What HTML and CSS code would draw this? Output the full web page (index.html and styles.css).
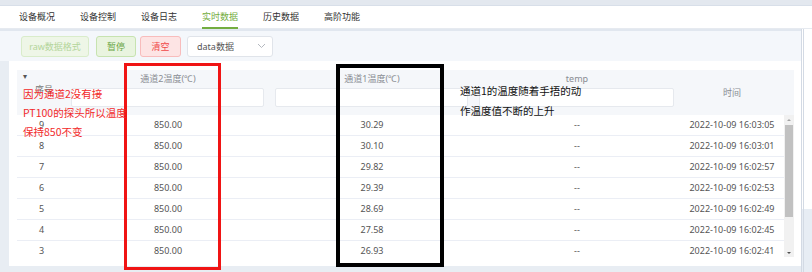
FILE: index.html
```html
<!DOCTYPE html>
<html lang="zh-CN">
<head>
    <meta charset="UTF-8">
    <title>实时数据</title>
    <link rel="stylesheet" href="styles.css">
</head>
<body>
    <div class="topband"></div>
    <nav class="tabs">
        <span class="tab">设备概况</span>
        <span class="tab">设备控制</span>
        <span class="tab">设备日志</span>
        <span class="tab active">实时数据</span>
        <span class="tab">历史数据</span>
        <span class="tab">高阶功能</span>
    </nav>

    <div class="main">
        <div class="work">
            <div class="toolbar">
                <button class="btn btn-raw">raw数据格式</button>
                <button class="btn btn-pause">暂停</button>
                <button class="btn btn-clear">清空</button>
                <div class="select">
                    <span>data数据</span>
                    <svg class="chevron" width="9" height="6" viewBox="0 0 9 6"><polyline points="1,1 4.5,4.5 8,1" fill="none" stroke="#b4b8bf" stroke-width="1"/></svg>
                </div>
            </div>

            <div class="panel-wrap">
                <div class="panel">
                    <div class="thead">
                        <div class="th th-index">
                            <span class="caret">▾</span>
                            <span>序号</span>
                        </div>
                        <div class="th">
                            <span class="th-label">通道2温度(℃)</span>
                            <span class="filter"></span>
                        </div>
                        <div class="th">
                            <span class="th-label">通道1温度(℃)</span>
                            <span class="filter"></span>
                        </div>
                        <div class="th">
                            <span class="th-label">temp</span>
                            <span class="filter"></span>
                        </div>
                        <div class="th th-time">时间</div>
                        <div class="th-gutter"></div>
                    </div>

                    <div class="tbody">
                        <div class="rows">
                            <div class="row"><span>9</span><span>850.00</span><span>30.29</span><span>--</span><span>2022-10-09 16:03:05</span></div>
                            <div class="row"><span>8</span><span>850.00</span><span>30.10</span><span>--</span><span>2022-10-09 16:03:01</span></div>
                            <div class="row"><span>7</span><span>850.00</span><span>29.82</span><span>--</span><span>2022-10-09 16:02:57</span></div>
                            <div class="row"><span>6</span><span>850.00</span><span>29.39</span><span>--</span><span>2022-10-09 16:02:53</span></div>
                            <div class="row"><span>5</span><span>850.00</span><span>28.69</span><span>--</span><span>2022-10-09 16:02:49</span></div>
                            <div class="row"><span>4</span><span>850.00</span><span>27.58</span><span>--</span><span>2022-10-09 16:02:45</span></div>
                            <div class="row"><span>3</span><span>850.00</span><span>26.93</span><span>--</span><span>2022-10-09 16:02:41</span></div>
                        </div>
                        <div class="vscroll">
                            <span class="arrow-up"></span>
                            <span class="thumb"></span>
                            <span class="arrow-down"></span>
                        </div>
                    </div>
                </div>
            </div>
        </div>
        <div class="side"></div>
    </div>

    <!-- annotations drawn over the screenshot -->
    <div class="note-box red-box"></div>
    <div class="note-box black-box"></div>
    <p class="note red-note">因为通道2没有接<br>PT100的探头所以温度<br>保持850不变</p>
    <p class="note black-note">通道1的温度随着手捂的动<br>作温度值不断的上升</p>
</body>
</html>
```

FILE: styles.css
```css
body {
    margin: 0;
    width: 812px;
    height: 272px;
    overflow: hidden;
    position: relative;
    background: #e8edf3;
    font-family: "Noto Sans", "Noto Sans CJK SC", sans-serif;
}

.topband {
    height: 5px;
    background: #e3e8ef;
    border-bottom: 1px solid #d8dfe9;
}

.tabs {
    height: 22px;
    display: flex;
    gap: 25px;
    padding-left: 19px;
    background: #fff;
    border-bottom: 1px solid #e6eaf0;
}

.tab {
    position: relative;
    font-size: 9px;
    line-height: 22px;
    color: #333;
}

.tab.active {
    color: #73ad40;
}

.tab.active::after {
    content: '';
    position: absolute;
    left: 0;
    right: 0;
    bottom: -1px;
    height: 2px;
    background: #73ad40;
}

.main {
    display: flex;
}

.work {
    flex: 1;
}

.toolbar {
    height: 30px;
    display: flex;
    align-items: center;
    padding-left: 21px;
    background: #f4f7fb;
    border-top: 2px solid #e1e7ef;
}

.btn {
    height: 21px;
    padding: 0;
    border-radius: 3px;
    border: 1px solid;
    font-family: inherit;
    font-size: 9px;
    line-height: 19px;
}

.btn-raw {
    width: 68px;
    margin-right: 7px;
    color: #b3d59a;
    background: #eef6e7;
    border-color: #d9ecca;
}

.btn-pause {
    width: 40px;
    margin-right: 4px;
    color: #6aa646;
    background: #e9f4df;
    border-color: #c7e3b0;
}

.btn-clear {
    width: 41px;
    margin-right: 6px;
    color: #f04848;
    background: #fde4e4;
    border-color: #f8bcbc;
}

.select {
    width: 86px;
    height: 21px;
    box-sizing: border-box;
    display: flex;
    align-items: center;
    justify-content: space-between;
    padding: 0 6px 0 9px;
    background: #fff;
    border: 1px solid #e0e4ea;
    border-radius: 3px;
    font-size: 9px;
    color: #555;
}

.panel-wrap {
    height: 211px;
    padding-left: 9px;
}

.panel {
    height: 187px;
    padding: 9px 7px 9px 8px;
    background: #fff;
}

.thead {
    display: grid;
    grid-template-columns: 49px 204px 204px 206px 104px 10px;
    height: 45px;
    background: #f5f7fa;
    font-size: 9px;
    color: #8a8d93;
}

.th {
    display: flex;
    flex-direction: column;
    align-items: center;
}

.th-label {
    height: 18px;
    line-height: 18px;
}

.filter {
    align-self: stretch;
    height: 17px;
    margin: 0 6px 0 5px;
    background: #fff;
    border: 1px solid #e6e9ee;
    border-radius: 2px;
}

.th-index {
    align-items: flex-start;
    padding-left: 6px;
    color: #777;
}

.caret {
    font-size: 8px;
    line-height: 10px;
    margin-top: 1px;
    color: #555;
}

.th-index span:last-child {
    margin: 2px 0 0 12px;
}

.th-time {
    justify-content: center;
}

.tbody {
    display: flex;
    height: 142px;
    overflow: hidden;
}

.rows {
    width: 767px;
}

.row {
    display: grid;
    grid-template-columns: 49px 204px 204px 206px 104px;
    height: 20px;
    border-bottom: 1px solid #ebeef5;
    font-size: 9px;
    line-height: 20px;
    color: #555;
    text-align: center;
}

.vscroll {
    width: 10px;
    height: 142px;
    position: relative;
    background: #f1f1f1;
}

.thumb {
    position: absolute;
    left: 1px;
    right: 1px;
    top: 10px;
    height: 92px;
    background: #c1c1c1;
}

.arrow-up,
.arrow-down {
    position: absolute;
    left: 3px;
    width: 0;
    height: 0;
    border-left: 2px solid transparent;
    border-right: 2px solid transparent;
}

.arrow-up {
    top: 4px;
    border-bottom: 2px solid #a3a3a3;
}

.arrow-down {
    bottom: 3px;
    border-top: 2px solid #505050;
}

.side {
    width: 8px;
    background: linear-gradient(#fff 0, #fff 180px, #e7edf4 180px);
    border-left: 3px double #d3dae4;
}

/* annotations */
.note-box {
    position: absolute;
    box-sizing: border-box;
}

.red-box {
    left: 124px;
    top: 63px;
    width: 97px;
    height: 207px;
    border: 3px solid #f01414;
}

.black-box {
    left: 336px;
    top: 64px;
    width: 108px;
    height: 203px;
    border: 4px solid #000;
}

.note {
    position: absolute;
    margin: 0;
    font-family: "Noto Sans CJK SC", sans-serif;
    font-size: 10.5px;
}

.red-note {
    left: 23px;
    top: 84px;
    line-height: 19px;
    color: #f22a2a;
}

.black-note {
    left: 460px;
    top: 81px;
    line-height: 20px;
    color: #111;
}
```
